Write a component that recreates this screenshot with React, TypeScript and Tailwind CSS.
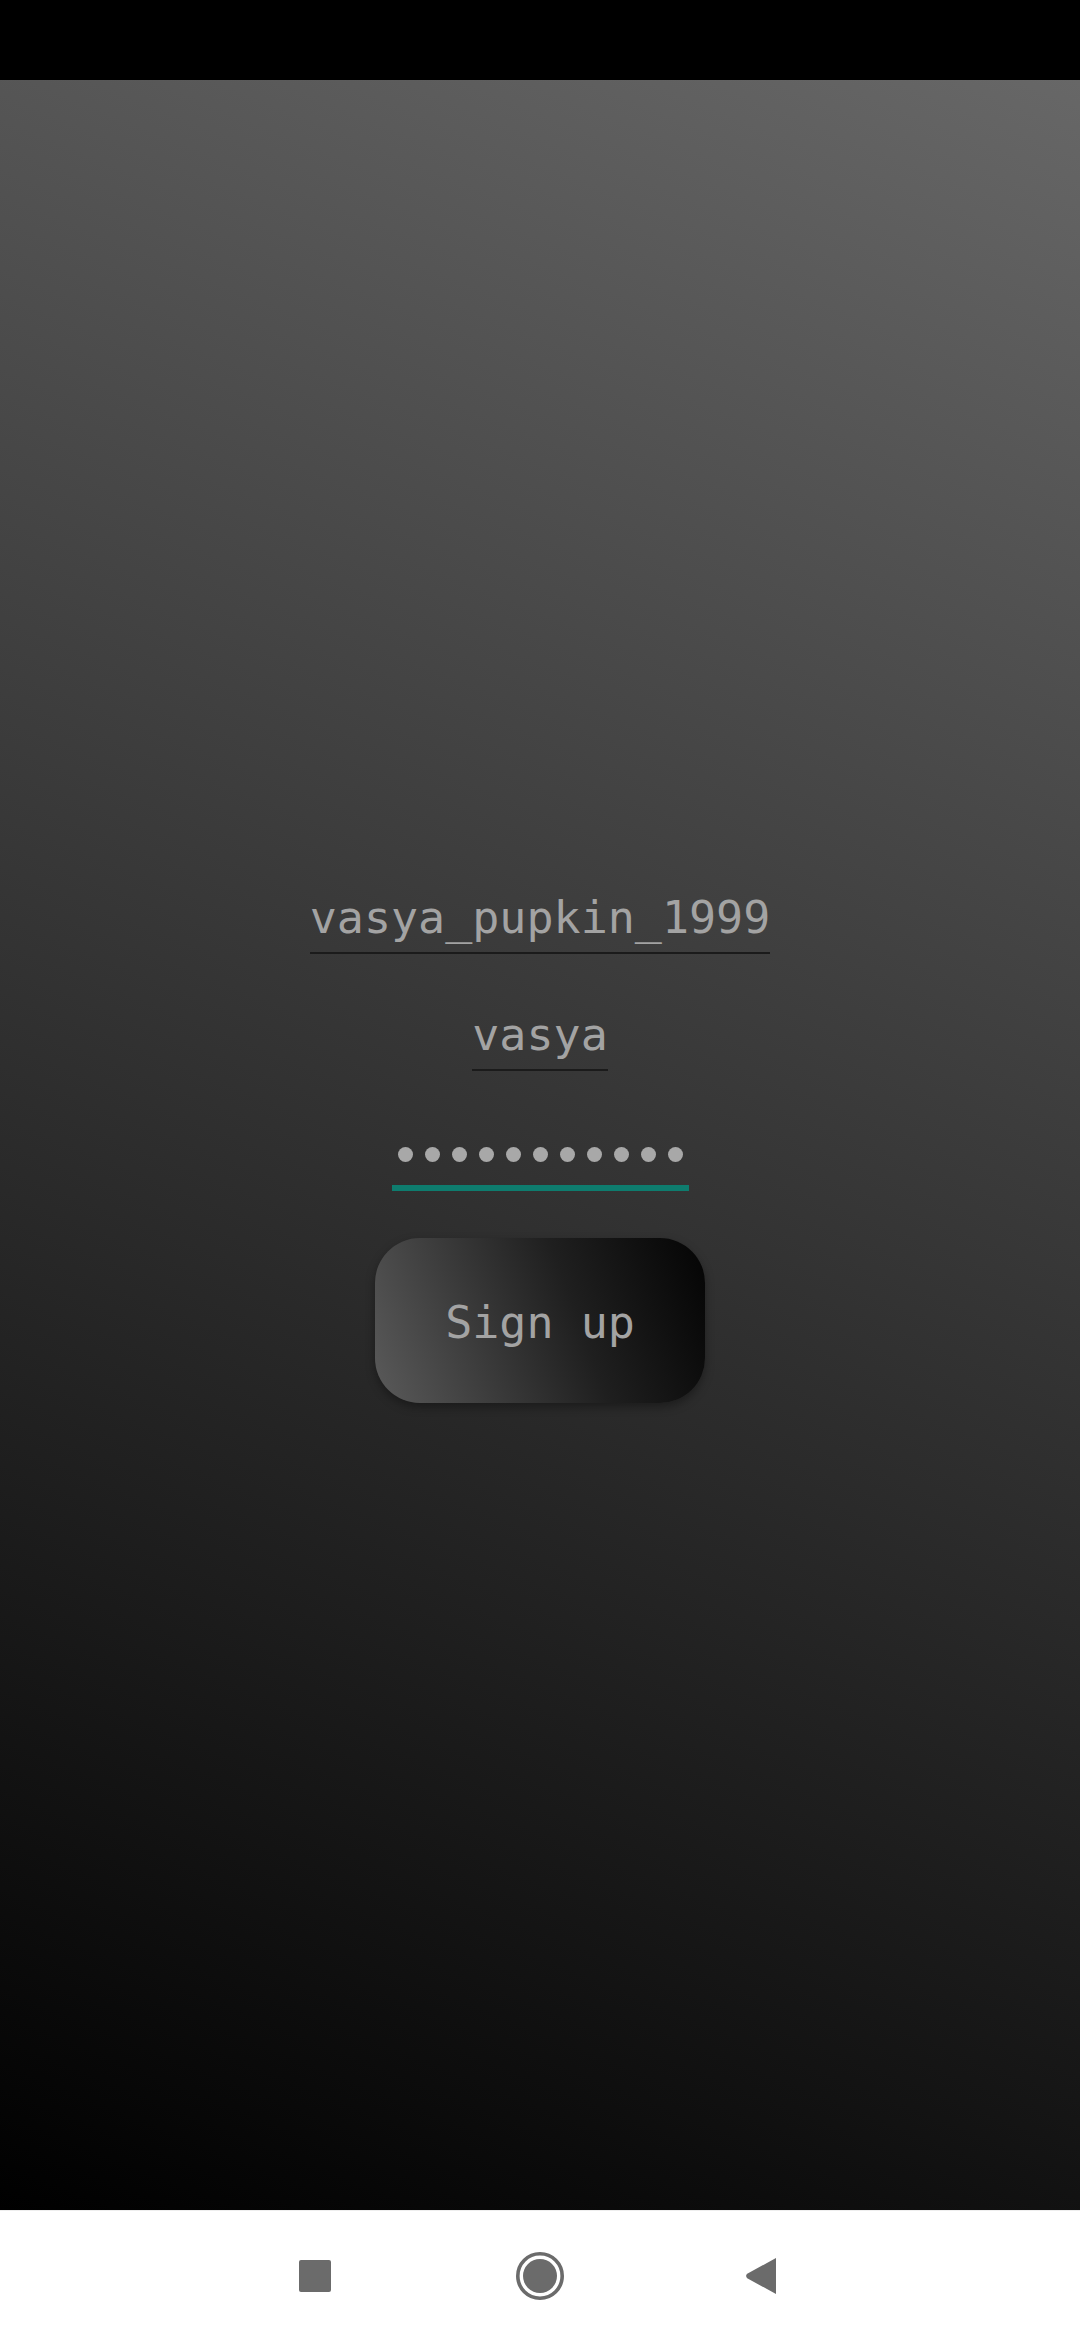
import React from "react";

function Field({ text }: { text: string }) {
  return (
    <div className="inline-flex flex-col items-stretch">
      <span className="block text-[45px] leading-[46px] text-[#a3a3a3] whitespace-pre font-['DejaVu_Sans_Mono',monospace]">
        {text}
      </span>
      <div className="mt-[11px] h-[2px] bg-[#1b1b1b]" />
    </div>
  );
}

export default function App() {
  const dots = Array.from({ length: 11 });
  return (
    <div className="flex flex-col w-full h-[2340px] overflow-hidden">
      <div className="h-[80px] shrink-0 bg-black" />
      <main className="flex-1 flex flex-col items-center justify-center pt-[7px] bg-[linear-gradient(22deg,#000000,#676767)]">
        <Field text="vasya_pupkin_1999" />
        <div className="mt-[58px]">
          <Field text="vasya" />
        </div>
        <div className="mt-[58px] inline-flex flex-col items-stretch">
          <div className="flex h-[52px] items-center">
            {dots.map((_, i) => (
              <div key={i} className="w-[27px] flex justify-center">
                <div className="w-[15px] h-[15px] rounded-full bg-[#a8a8a8]" />
              </div>
            ))}
          </div>
          <div className="mt-[4px] h-[6px] bg-[#0e7c6e]" />
        </div>
        <button className="mt-[47px] w-[330px] h-[165px] pt-[6px] rounded-[45px] flex items-center justify-center bg-[linear-gradient(70deg,#5a5a5a,#1f1f1f_60%,#040404)] shadow-[0_4px_10px_rgba(0,0,0,0.35)]">
          <span className="text-[45px] leading-[52px] text-[#a3a3a3] whitespace-pre font-['DejaVu_Sans_Mono',monospace]">
            Sign up
          </span>
        </button>
      </main>
      <nav className="h-[130px] shrink-0 bg-white border-t border-[#eeeeee] flex items-center pl-[291px]">
        <div className="w-[48px] h-[48px] flex items-center justify-center">
          <div className="w-[32px] h-[32px] rounded-[2px] bg-[#6b6b6b]" />
        </div>
        <div className="ml-[177px] w-[48px] h-[48px] flex items-center justify-center">
          <svg width="48" height="48" viewBox="0 0 48 48">
            <circle cx="24" cy="24" r="22.2" fill="none" stroke="#6b6b6b" strokeWidth="3.6" />
            <circle cx="24" cy="24" r="17" fill="#6b6b6b" />
          </svg>
        </div>
        <div className="ml-[172px] w-[48px] h-[48px] flex items-center justify-center">
          <svg width="31" height="36" viewBox="0 0 31 36">
            <path d="M31 0 L31 36 L2.2 20.2 Q0 18 2.2 15.8 Z" fill="#6b6b6b" />
          </svg>
        </div>
      </nav>
    </div>
  );
}
